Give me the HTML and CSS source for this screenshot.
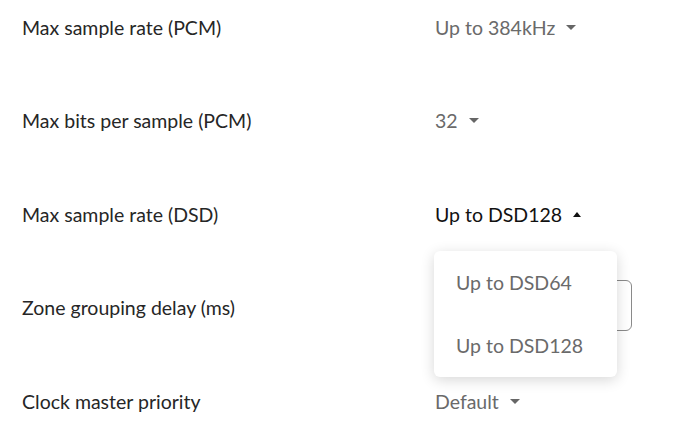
FILE: index.html
```html
<!DOCTYPE html>
<html>
<head>
<meta charset="utf-8">
<link rel="stylesheet" href="styles.css">
</head>
<body>
<div class="settings">
  <div class="row">
    <div class="label">Max sample rate (PCM)</div>
    <div class="value"><span class="select">Up to 384kHz<span class="caret down"></span></span></div>
  </div>
  <div class="row">
    <div class="label">Max bits per sample (PCM)</div>
    <div class="value"><span class="select">32<span class="caret down"></span></span></div>
  </div>
  <div class="row">
    <div class="label">Max sample rate (DSD)</div>
    <div class="value open">
      <span class="select active">Up to DSD128<span class="caret up"></span></span>
      <div class="menu">
        <div class="item">Up to DSD64</div>
        <div class="item">Up to DSD128</div>
      </div>
    </div>
  </div>
  <div class="row">
    <div class="label">Zone grouping delay (ms)</div>
    <div class="value"><div class="input"></div></div>
  </div>
  <div class="row">
    <div class="label">Clock master priority</div>
    <div class="value"><span class="select">Default<span class="caret down"></span></span></div>
  </div>
</div>
</body>
</html>
```
FILE: styles.css
```css
html, body {
  margin: 0;
  padding: 0;
  background: #ffffff;
}
body {
  font-family: Lato, "Open Sans", sans-serif;
  font-size: 19.5px;
  font-weight: 400;
  width: 690px;
  height: 442px;
  overflow: hidden;
}
.settings {
  display: flex;
  flex-direction: column;
  gap: 37.5px;
  padding-left: 22px;
  margin-top: -1px;
}
.row {
  display: grid;
  grid-template-columns: 413px 1fr;
  align-items: center;
  height: 56px;
}
.label {
  color: #262626;
}
.value {
  position: relative;
  color: #6a6a6a;
}
.select {
  display: inline-flex;
  align-items: center;
}
.select.active {
  color: #111111;
}
.caret {
  display: inline-block;
  width: 0;
  height: 0;
  margin-left: 11px;
  border-left: 5px solid transparent;
  border-right: 5px solid transparent;
}
.caret.down {
  border-top: 5px solid #666666;
}
.caret.up {
  border-left-width: 4px;
  border-right-width: 4px;
  border-bottom: 5px solid #111111;
}
.input {
  width: 195px;
  height: 49px;
  border: 1px solid #8a8a8a;
  border-radius: 6px;
  margin-top: -5px;
}
.menu {
  position: absolute;
  left: -1px;
  top: calc(100% + 25px);
  width: 183px;
  padding-top: 1px;
  background: #ffffff;
  border-radius: 6px;
  box-shadow: 0 3px 14px rgba(0, 0, 0, 0.16);
  z-index: 10;
}
.item {
  height: 62.5px;
  display: flex;
  align-items: center;
  padding-left: 22px;
  color: #6a6a6a;
}
```
